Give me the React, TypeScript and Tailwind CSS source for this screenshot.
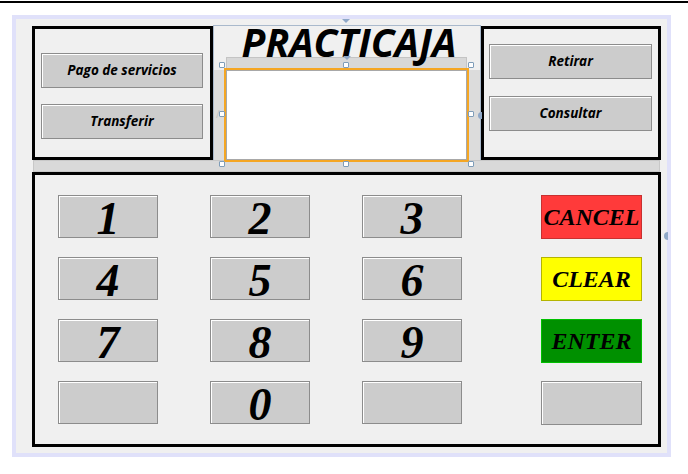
import React from 'react';

const sans = { fontFamily: '"Open Sans", "Liberation Sans", sans-serif' };
const serif = { fontFamily: '"Liberation Serif", "Times New Roman", serif' };

// botón gris del panel superior
const SideButton = ({ label }: { label: string }) => (
  <button
    className="h-[35px] border border-[#8c8c8c] bg-[#cccccc] shadow-[inset_1px_1px_0_#ffffff] text-[13.5px] font-bold italic text-black leading-none"
    style={sans}
  >
    {label}
  </button>
);

const Key = ({ label }: { label?: string }) => (
  <button
    className="w-[100px] h-[43px] border border-[#8c8c8c] bg-[#cccccc] shadow-[inset_1px_1px_0_#ffffff] flex justify-center items-start overflow-visible"
  >
    <span className="block text-[46px] font-bold italic leading-none text-black" style={serif}>
      {label}
    </span>
  </button>
);

const ActionKey = ({ label, cls }: { label?: string; cls: string }) => (
  <button className={`w-[101px] h-[44px] border flex justify-center items-center ${cls}`}>
    <span className="block text-[24px] font-bold italic leading-none text-black" style={serif}>
      {label}
    </span>
  </button>
);

const Handle = ({ cls }: { cls: string }) => (
  <div className={`absolute z-20 w-[6px] h-[6px] bg-white border border-[#7f9db9] rounded-[1px] ${cls}`} />
);

const rows: { keys: (string | undefined)[]; action?: string; cls: string }[] = [
  { keys: ['1', '2', '3'], action: 'CANCEL', cls: 'bg-[#ff3a3a] border-[#c83030]' },
  { keys: ['4', '5', '6'], action: 'CLEAR', cls: 'bg-[#ffff00] border-[#b4b400]' },
  { keys: ['7', '8', '9'], action: 'ENTER', cls: 'bg-[#009000] border-[#00c000]' },
  { keys: [undefined, '0', undefined], action: undefined, cls: 'bg-[#cccccc] border-[#8c8c8c] shadow-[inset_1px_1px_0_#ffffff]' },
];

export default function App() {
  return (
    <div className="w-[688px] h-[474px] bg-white overflow-hidden">
      <div className="h-[2px] mt-[1px] bg-black" />

      <div className="relative ml-[12px] mt-[12px] w-[659px] h-[442px] border-4 border-[#e0e1fa] bg-[#f0f0f0]">
        {/* marcadores del diseñador */}
        <div className="absolute left-[326px] top-0 w-0 h-0 border-l-[4px] border-r-[4px] border-t-[4px] border-l-transparent border-r-transparent border-t-[#8fa8c8]" />
        <div className="absolute right-[-1px] top-[213px] w-[4px] h-[8px] rounded-l-full bg-[#8fa8c8]" />

        <div className="flex mt-[7px] ml-[16px] h-[134px]">
          <div className="w-[181px] border-[3px] border-black flex flex-col pl-[6px] pr-[7px] pt-[24px] gap-[16px]">
            <SideButton label="Pago de servicios" />
            <SideButton label="Transferir" />
          </div>

          <div className="relative w-[268px] flex flex-col border-x border-t border-[#a9b9cc] -mt-[1px]">
            <div className="h-[31px] flex justify-center items-start">
              <span className="relative z-10 text-[39px] font-bold italic leading-none text-black -mt-[4px] ml-[4px]" style={sans}>
                PRACTICAJA
              </span>
            </div>
            <div className="h-[13px] flex">
              <div className="ml-[12px] w-[241px] h-[13px] bg-[#d8d8d8] border border-[#c4c4c4]" />
            </div>
            <div className="flex-1 bg-[#dcdcdc]">
              <div className="ml-[12px] w-[241px] h-[90px] bg-white border border-[#a8a8a8] outline-2 outline-[#f5a623]" />
            </div>

            <div className="absolute z-20 left-[129px] top-[30px] w-0 h-0 border-l-[4px] border-r-[4px] border-t-[4px] border-l-transparent border-r-transparent border-t-[#8fa8c8]" />
            <div className="absolute right-[-2px] top-[86px] w-[4px] h-[7px] rounded-l-full bg-[#8fa8c8]" />
            <span className="absolute left-[2px] top-[83px] text-[10px] text-[#c0c0c0] leading-none" style={sans}>/</span>

            <Handle cls="left-[5px] top-[36px]" />
            <Handle cls="left-[129px] top-[36px]" />
            <Handle cls="left-[254px] top-[36px]" />
            <Handle cls="left-[5px] top-[85px]" />
            <Handle cls="left-[254px] top-[85px]" />
            <Handle cls="left-[5px] top-[135px]" />
            <Handle cls="left-[129px] top-[135px]" />
            <Handle cls="left-[254px] top-[135px]" />
          </div>

          <div className="w-[180px] border-[3px] border-black flex flex-col pl-[5px] pr-[6px] pt-[15px] gap-[17px]">
            <SideButton label="Retirar" />
            <SideButton label="Consultar" />
          </div>
        </div>

        <div className="ml-[17px] w-[627px] h-[12px] bg-[#d9d9d9] border border-[#c8c8c8]" />

        <div className="ml-[16px] w-[629px] h-[275px] border-[3px] border-black pl-[23px] pt-[20px] flex flex-col gap-[19px]">
          {rows.map((r, i) => (
            <div key={i} className="flex items-start h-[43px]">
              <div className="flex gap-[52px]">
                {r.keys.map((k, j) => (
                  <Key key={j} label={k} />
                ))}
              </div>
              <div className="ml-[79px]">
                <ActionKey label={r.action} cls={r.cls} />
              </div>
            </div>
          ))}
        </div>
      </div>
    </div>
  );
}
